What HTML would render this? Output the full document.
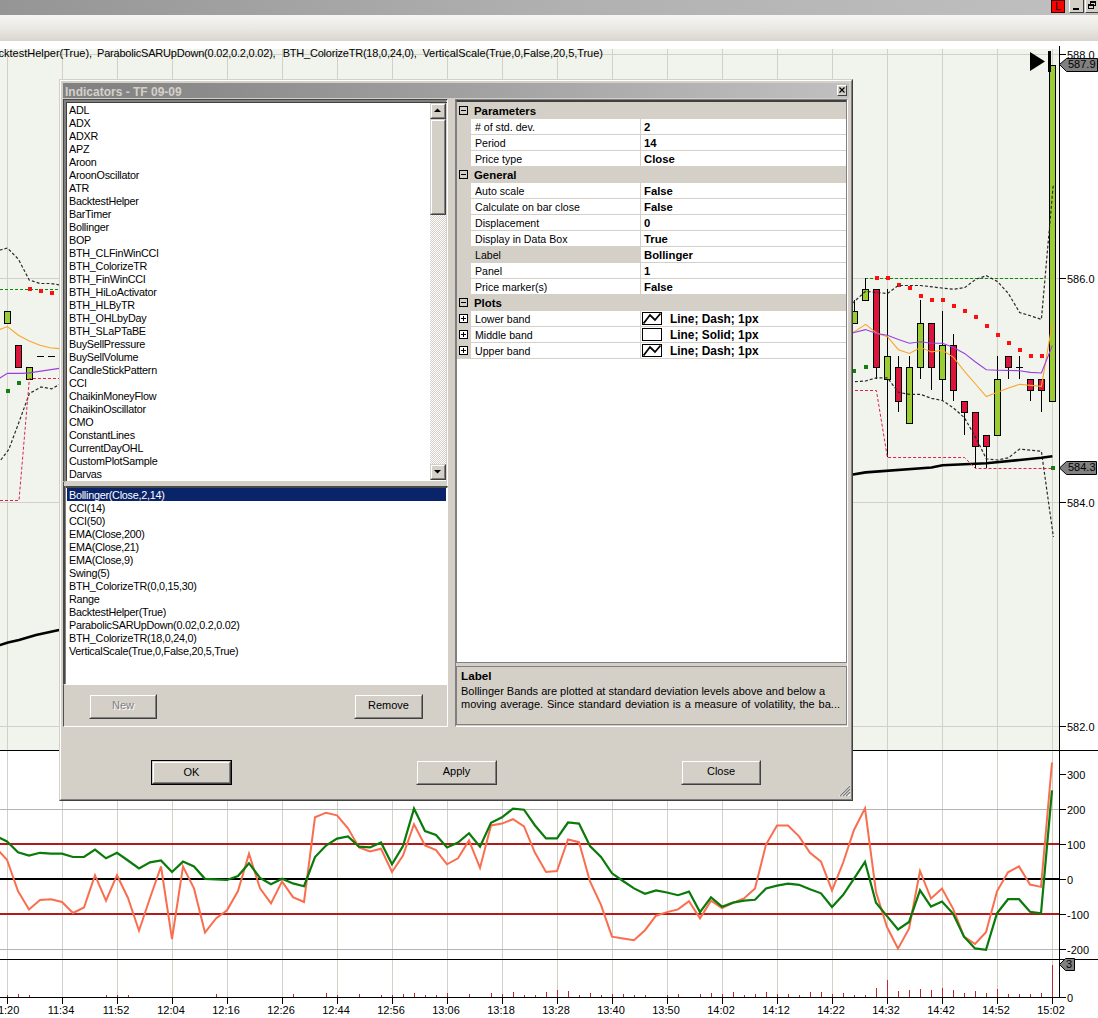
<!DOCTYPE html><html><head><meta charset="utf-8"><style>
*{box-sizing:border-box;margin:0;padding:0}
html,body{width:1098px;height:1018px;overflow:hidden;background:#fff;font-family:"Liberation Sans", sans-serif;}
.ab{position:absolute}
.t{position:absolute;white-space:pre;line-height:1;color:#000}
</style></head><body>

<div class="ab" style="left:0;top:0;width:1098px;height:15px;background:linear-gradient(to right,#959595,#b0b0b0 50%,#c0c0c0)"></div>
<div class="ab" style="left:0;top:15px;width:1098px;height:26px;background:linear-gradient(to bottom,#f6f5f2,#ebe9e4 50%,#d9d5cd)"></div>
<div class="ab" style="left:1051px;top:0;width:14px;height:13px;background:#ff0000;border:1px solid #3a0000"></div>
<div class="t" style="left:1055px;top:1px;font-size:11px;font-family:"Liberation Sans", sans-serif">L</div>
<div class="ab" style="left:1069px;top:-2px;width:15px;height:15px;background:#d4d0c8;border-left:1px solid #fff;border-top:1px solid #fff;border-right:1px solid #404040;border-bottom:1px solid #404040"></div>
<div class="ab" style="left:1073px;top:8px;width:6px;height:2px;background:#000"></div>
<div class="ab" style="left:1085px;top:-2px;width:15px;height:15px;background:#d4d0c8;border-left:1px solid #fff;border-top:1px solid #fff;border-right:1px solid #404040;border-bottom:1px solid #404040"></div>
<div class="ab" style="left:1090px;top:1px;width:6px;height:5px;border:1px solid #000;border-top-width:2px"></div>
<div class="ab" style="left:1088px;top:4px;width:6px;height:5px;border:1px solid #000;border-top-width:2px;background:#d4d0c8"></div>
<svg class="ab" style="left:0;top:0" width="1098" height="1018" shape-rendering="crispEdges">
<rect x="0" y="49" width="1059" height="701" fill="#f1f4ed"/>
<line x1="7.5" y1="49" x2="7.5" y2="750" stroke="#d4d0c8"/>
<line x1="7.5" y1="751" x2="7.5" y2="997" stroke="#d4d0c8"/>
<line x1="62.5" y1="49" x2="62.5" y2="750" stroke="#d4d0c8"/>
<line x1="62.5" y1="751" x2="62.5" y2="997" stroke="#d4d0c8"/>
<line x1="117.5" y1="49" x2="117.5" y2="750" stroke="#d4d0c8"/>
<line x1="117.5" y1="751" x2="117.5" y2="997" stroke="#d4d0c8"/>
<line x1="172.5" y1="49" x2="172.5" y2="750" stroke="#d4d0c8"/>
<line x1="172.5" y1="751" x2="172.5" y2="997" stroke="#d4d0c8"/>
<line x1="227.5" y1="49" x2="227.5" y2="750" stroke="#d4d0c8"/>
<line x1="227.5" y1="751" x2="227.5" y2="997" stroke="#d4d0c8"/>
<line x1="282.5" y1="49" x2="282.5" y2="750" stroke="#d4d0c8"/>
<line x1="282.5" y1="751" x2="282.5" y2="997" stroke="#d4d0c8"/>
<line x1="337.5" y1="49" x2="337.5" y2="750" stroke="#d4d0c8"/>
<line x1="337.5" y1="751" x2="337.5" y2="997" stroke="#d4d0c8"/>
<line x1="392.5" y1="49" x2="392.5" y2="750" stroke="#d4d0c8"/>
<line x1="392.5" y1="751" x2="392.5" y2="997" stroke="#d4d0c8"/>
<line x1="447.5" y1="49" x2="447.5" y2="750" stroke="#d4d0c8"/>
<line x1="447.5" y1="751" x2="447.5" y2="997" stroke="#d4d0c8"/>
<line x1="502.5" y1="49" x2="502.5" y2="750" stroke="#d4d0c8"/>
<line x1="502.5" y1="751" x2="502.5" y2="997" stroke="#d4d0c8"/>
<line x1="557.5" y1="49" x2="557.5" y2="750" stroke="#d4d0c8"/>
<line x1="557.5" y1="751" x2="557.5" y2="997" stroke="#d4d0c8"/>
<line x1="612.5" y1="49" x2="612.5" y2="750" stroke="#d4d0c8"/>
<line x1="612.5" y1="751" x2="612.5" y2="997" stroke="#d4d0c8"/>
<line x1="667.5" y1="49" x2="667.5" y2="750" stroke="#d4d0c8"/>
<line x1="667.5" y1="751" x2="667.5" y2="997" stroke="#d4d0c8"/>
<line x1="722.5" y1="49" x2="722.5" y2="750" stroke="#d4d0c8"/>
<line x1="722.5" y1="751" x2="722.5" y2="997" stroke="#d4d0c8"/>
<line x1="777.5" y1="49" x2="777.5" y2="750" stroke="#d4d0c8"/>
<line x1="777.5" y1="751" x2="777.5" y2="997" stroke="#d4d0c8"/>
<line x1="832.5" y1="49" x2="832.5" y2="750" stroke="#d4d0c8"/>
<line x1="832.5" y1="751" x2="832.5" y2="997" stroke="#d4d0c8"/>
<line x1="887.5" y1="49" x2="887.5" y2="750" stroke="#d4d0c8"/>
<line x1="887.5" y1="751" x2="887.5" y2="997" stroke="#d4d0c8"/>
<line x1="942.5" y1="49" x2="942.5" y2="750" stroke="#d4d0c8"/>
<line x1="942.5" y1="751" x2="942.5" y2="997" stroke="#d4d0c8"/>
<line x1="997.5" y1="49" x2="997.5" y2="750" stroke="#d4d0c8"/>
<line x1="997.5" y1="751" x2="997.5" y2="997" stroke="#d4d0c8"/>
<line x1="1052.5" y1="49" x2="1052.5" y2="750" stroke="#d4d0c8"/>
<line x1="1052.5" y1="751" x2="1052.5" y2="997" stroke="#d4d0c8"/>
<line x1="0" y1="54.5" x2="1059" y2="54.5" stroke="#d4d0c8"/>
<line x1="0" y1="278.5" x2="1059" y2="278.5" stroke="#d4d0c8"/>
<line x1="0" y1="502.5" x2="1059" y2="502.5" stroke="#d4d0c8"/>
<line x1="0" y1="726.5" x2="1059" y2="726.5" stroke="#d4d0c8"/>
<line x1="0" y1="809.5" x2="1059" y2="809.5" stroke="#b4b4b4"/>
<line x1="0" y1="949.5" x2="1059" y2="949.5" stroke="#b4b4b4"/>
<rect x="0" y="750" width="1098" height="1" fill="#000"/>
<rect x="0" y="959" width="1098" height="1" fill="#000"/>
<rect x="0" y="997" width="1059" height="1" fill="#000"/>
<rect x="1059" y="46" width="1" height="952" fill="#000"/>
<rect x="1059" y="54" width="7" height="1" fill="#000"/>
<rect x="1059" y="278" width="7" height="1" fill="#000"/>
<rect x="1059" y="502" width="7" height="1" fill="#000"/>
<rect x="1059" y="726" width="7" height="1" fill="#000"/>
<rect x="1059" y="774" width="7" height="1" fill="#000"/>
<rect x="1059" y="809" width="7" height="1" fill="#000"/>
<rect x="1059" y="844" width="7" height="1" fill="#000"/>
<rect x="1059" y="879" width="7" height="1" fill="#000"/>
<rect x="1059" y="914" width="7" height="1" fill="#000"/>
<rect x="1059" y="949" width="7" height="1" fill="#000"/>
<rect x="1059" y="997" width="7" height="1" fill="#000"/>
<rect x="7" y="997" width="1" height="7" fill="#000"/>
<rect x="62" y="997" width="1" height="7" fill="#000"/>
<rect x="117" y="997" width="1" height="7" fill="#000"/>
<rect x="172" y="997" width="1" height="7" fill="#000"/>
<rect x="227" y="997" width="1" height="7" fill="#000"/>
<rect x="282" y="997" width="1" height="7" fill="#000"/>
<rect x="337" y="997" width="1" height="7" fill="#000"/>
<rect x="392" y="997" width="1" height="7" fill="#000"/>
<rect x="447" y="997" width="1" height="7" fill="#000"/>
<rect x="502" y="997" width="1" height="7" fill="#000"/>
<rect x="557" y="997" width="1" height="7" fill="#000"/>
<rect x="612" y="997" width="1" height="7" fill="#000"/>
<rect x="667" y="997" width="1" height="7" fill="#000"/>
<rect x="722" y="997" width="1" height="7" fill="#000"/>
<rect x="777" y="997" width="1" height="7" fill="#000"/>
<rect x="832" y="997" width="1" height="7" fill="#000"/>
<rect x="887" y="997" width="1" height="7" fill="#000"/>
<rect x="942" y="997" width="1" height="7" fill="#000"/>
<rect x="997" y="997" width="1" height="7" fill="#000"/>
<rect x="1052" y="997" width="1" height="7" fill="#000"/>
<rect x="0" y="843" width="1059" height="2" fill="#b01c1c"/>
<rect x="0" y="913" width="1059" height="2" fill="#b01c1c"/>
<rect x="0" y="878" width="1059" height="2" fill="#000"/>
<rect x="7" y="995" width="1" height="2" fill="#c0282d"/>
<rect x="18" y="994" width="1" height="3" fill="#c0282d"/>
<rect x="29" y="995" width="1" height="2" fill="#c0282d"/>
<rect x="106" y="995" width="1" height="2" fill="#c0282d"/>
<rect x="117" y="995" width="1" height="2" fill="#c0282d"/>
<rect x="128" y="995" width="1" height="2" fill="#c0282d"/>
<rect x="216" y="994" width="1" height="3" fill="#c0282d"/>
<rect x="293" y="994" width="1" height="3" fill="#c0282d"/>
<rect x="326" y="993" width="1" height="4" fill="#c0282d"/>
<rect x="337" y="995" width="1" height="2" fill="#c0282d"/>
<rect x="359" y="994" width="1" height="3" fill="#c0282d"/>
<rect x="381" y="995" width="1" height="2" fill="#c0282d"/>
<rect x="392" y="995" width="1" height="2" fill="#c0282d"/>
<rect x="403" y="994" width="1" height="3" fill="#c0282d"/>
<rect x="414" y="993" width="1" height="4" fill="#c0282d"/>
<rect x="425" y="995" width="1" height="2" fill="#c0282d"/>
<rect x="436" y="995" width="1" height="2" fill="#c0282d"/>
<rect x="447" y="993" width="1" height="4" fill="#c0282d"/>
<rect x="469" y="994" width="1" height="3" fill="#c0282d"/>
<rect x="491" y="993" width="1" height="4" fill="#c0282d"/>
<rect x="502" y="994" width="1" height="3" fill="#c0282d"/>
<rect x="513" y="992" width="1" height="5" fill="#c0282d"/>
<rect x="524" y="995" width="1" height="2" fill="#c0282d"/>
<rect x="535" y="995" width="1" height="2" fill="#c0282d"/>
<rect x="546" y="992" width="1" height="5" fill="#c0282d"/>
<rect x="557" y="990" width="1" height="7" fill="#c0282d"/>
<rect x="568" y="991" width="1" height="6" fill="#c0282d"/>
<rect x="579" y="995" width="1" height="2" fill="#c0282d"/>
<rect x="590" y="993" width="1" height="4" fill="#c0282d"/>
<rect x="601" y="995" width="1" height="2" fill="#c0282d"/>
<rect x="612" y="994" width="1" height="3" fill="#c0282d"/>
<rect x="623" y="994" width="1" height="3" fill="#c0282d"/>
<rect x="634" y="995" width="1" height="2" fill="#c0282d"/>
<rect x="645" y="995" width="1" height="2" fill="#c0282d"/>
<rect x="667" y="995" width="1" height="2" fill="#c0282d"/>
<rect x="678" y="994" width="1" height="3" fill="#c0282d"/>
<rect x="700" y="994" width="1" height="3" fill="#c0282d"/>
<rect x="711" y="993" width="1" height="4" fill="#c0282d"/>
<rect x="722" y="994" width="1" height="3" fill="#c0282d"/>
<rect x="733" y="992" width="1" height="5" fill="#c0282d"/>
<rect x="744" y="995" width="1" height="2" fill="#c0282d"/>
<rect x="755" y="994" width="1" height="3" fill="#c0282d"/>
<rect x="766" y="992" width="1" height="5" fill="#c0282d"/>
<rect x="777" y="994" width="1" height="3" fill="#c0282d"/>
<rect x="788" y="994" width="1" height="3" fill="#c0282d"/>
<rect x="799" y="995" width="1" height="2" fill="#c0282d"/>
<rect x="810" y="992" width="1" height="5" fill="#c0282d"/>
<rect x="821" y="992" width="1" height="5" fill="#c0282d"/>
<rect x="832" y="994" width="1" height="3" fill="#c0282d"/>
<rect x="843" y="993" width="1" height="4" fill="#c0282d"/>
<rect x="854" y="995" width="1" height="2" fill="#c0282d"/>
<rect x="865" y="995" width="1" height="2" fill="#c0282d"/>
<rect x="876" y="988" width="1" height="9" fill="#c0282d"/>
<rect x="887" y="980" width="1" height="17" fill="#c0282d"/>
<rect x="898" y="991" width="1" height="6" fill="#c0282d"/>
<rect x="909" y="990" width="1" height="7" fill="#c0282d"/>
<rect x="920" y="989" width="1" height="8" fill="#c0282d"/>
<rect x="931" y="990" width="1" height="7" fill="#c0282d"/>
<rect x="942" y="988" width="1" height="9" fill="#c0282d"/>
<rect x="953" y="990" width="1" height="7" fill="#c0282d"/>
<rect x="964" y="993" width="1" height="4" fill="#c0282d"/>
<rect x="975" y="991" width="1" height="6" fill="#c0282d"/>
<rect x="986" y="993" width="1" height="4" fill="#c0282d"/>
<rect x="997" y="989" width="1" height="8" fill="#c0282d"/>
<rect x="1008" y="994" width="1" height="3" fill="#c0282d"/>
<rect x="1019" y="994" width="1" height="3" fill="#c0282d"/>
<rect x="1030" y="994" width="1" height="3" fill="#c0282d"/>
<rect x="1041" y="993" width="1" height="4" fill="#c0282d"/>
<rect x="1052" y="965" width="1" height="32" fill="#c0282d"/>
</svg>
<svg class="ab" style="left:0;top:0" width="1098" height="1018">
<defs><clipPath id="cc"><rect x="0" y="751" width="1059" height="208"/></clipPath></defs>
<g clip-path="url(#cc)"><polyline points="-4.0,848.0 7.0,859.7 18.0,891.0 29.0,909.4 40.0,900.0 51.0,899.3 62.0,902.0 73.0,913.0 84.0,907.5 95.0,875.2 106.0,900.7 117.0,875.2 128.0,898.0 139.0,930.7 150.0,898.0 161.0,866.5 172.0,939.0 183.0,866.5 194.0,888.4 205.0,932.6 216.0,918.4 227.0,910.2 238.0,891.0 249.0,853.7 260.0,888.4 271.0,903.4 282.0,881.5 293.0,897.1 304.0,902.0 315.0,817.3 326.0,812.7 337.0,815.4 348.0,828.3 359.0,847.4 370.0,851.5 381.0,848.7 392.0,872.0 403.0,855.6 414.0,824.2 425.0,845.5 436.0,850.1 447.0,864.3 458.0,858.3 469.0,840.5 480.0,867.9 491.0,825.5 502.0,823.6 513.0,819.2 524.0,826.3 535.0,852.8 546.0,872.0 557.0,871.1 568.0,839.5 579.0,842.2 590.0,881.5 601.0,904.8 612.0,936.7 623.0,938.4 634.0,940.3 645.0,930.2 656.0,915.7 667.0,912.1 678.0,909.4 689.0,901.2 700.0,918.4 711.0,900.7 722.0,908.0 733.0,902.8 744.0,898.5 755.0,888.4 766.0,844.6 777.0,825.5 788.0,825.5 799.0,836.4 810.0,852.8 821.0,861.6 832.0,890.4 843.0,863.0 854.0,830.0 865.0,808.4 876.0,892.0 887.0,927.0 898.0,948.7 909.0,928.7 920.0,871.0 931.0,898.6 942.0,888.6 953.0,908.6 964.0,936.7 975.0,944.0 986.0,932.3 997.0,891.3 1008.0,872.3 1019.0,866.4 1030.0,884.6 1041.0,886.9 1052.0,762.5" fill="none" stroke="#fa6e4f" stroke-width="2" stroke-linejoin="miter"/>
<polyline points="-4.0,836.0 7.0,841.4 18.0,852.3 29.0,855.6 40.0,852.8 51.0,853.7 62.0,853.7 73.0,857.0 84.0,857.0 95.0,849.6 106.0,858.3 117.0,852.8 128.0,860.5 139.0,868.4 150.0,862.4 161.0,860.5 172.0,872.0 183.0,861.6 194.0,866.5 205.0,878.8 216.0,879.3 227.0,880.0 238.0,876.0 249.0,863.2 260.0,878.0 271.0,884.3 282.0,878.8 293.0,883.4 304.0,886.2 315.0,857.0 326.0,845.5 337.0,838.6 348.0,836.4 359.0,846.6 370.0,847.4 381.0,842.5 392.0,864.3 403.0,846.0 414.0,808.6 425.0,831.0 436.0,835.0 447.0,847.4 458.0,842.5 469.0,833.2 480.0,846.6 491.0,822.8 502.0,817.3 513.0,808.6 524.0,809.7 535.0,825.5 546.0,838.4 557.0,838.4 568.0,822.5 579.0,823.6 590.0,846.0 601.0,857.0 612.0,873.3 623.0,881.0 634.0,888.4 645.0,893.8 656.0,890.5 667.0,892.5 678.0,895.2 689.0,891.6 700.0,912.1 711.0,897.4 722.0,906.7 733.0,902.6 744.0,900.7 755.0,899.8 766.0,888.4 777.0,885.6 788.0,883.7 799.0,884.8 810.0,889.2 821.0,893.3 832.0,907.0 843.0,895.0 854.0,878.6 865.0,861.8 876.0,902.8 887.0,916.1 898.0,929.5 909.0,922.0 920.0,890.3 931.0,906.6 942.0,901.6 953.0,913.6 964.0,936.7 975.0,948.4 986.0,949.9 997.0,913.3 1008.0,899.2 1019.0,899.2 1030.0,911.8 1041.0,913.3 1052.0,790.3" fill="none" stroke="#0a7a0a" stroke-width="2.2"/></g>
<g shape-rendering="crispEdges">
<line x1="0" y1="289.5" x2="62" y2="289.5" stroke="#0a8a0a" stroke-dasharray="3,2"/>
<line x1="865" y1="278.5" x2="1045" y2="278.5" stroke="#0a8a0a" stroke-dasharray="3,2"/>
<rect x="28" y="287" width="4" height="4" fill="#ff1010"/>
<rect x="39" y="289" width="4" height="4" fill="#ff1010"/>
<rect x="50" y="291" width="4" height="4" fill="#ff1010"/>
<rect x="875" y="276" width="4" height="4" fill="#ff1010"/>
<rect x="886" y="276" width="4" height="4" fill="#ff1010"/>
<rect x="897" y="283" width="4" height="4" fill="#ff1010"/>
<rect x="908" y="286" width="4" height="4" fill="#ff1010"/>
<rect x="919" y="294" width="4" height="4" fill="#ff1010"/>
<rect x="930" y="298" width="4" height="4" fill="#ff1010"/>
<rect x="941" y="298" width="4" height="4" fill="#ff1010"/>
<rect x="952" y="304" width="4" height="4" fill="#ff1010"/>
<rect x="963" y="309" width="4" height="4" fill="#ff1010"/>
<rect x="974" y="315" width="4" height="4" fill="#ff1010"/>
<rect x="985" y="324" width="4" height="4" fill="#ff1010"/>
<rect x="996" y="333" width="4" height="4" fill="#ff1010"/>
<rect x="1007" y="341" width="4" height="4" fill="#ff1010"/>
<rect x="1018" y="348" width="4" height="4" fill="#ff1010"/>
<rect x="1029" y="354" width="4" height="4" fill="#ff1010"/>
<rect x="1040" y="354" width="4" height="4" fill="#ff1010"/>
<rect x="17" y="381" width="4" height="4" fill="#108010"/>
<rect x="6" y="389" width="4" height="4" fill="#108010"/>
<rect x="852" y="369" width="4" height="4" fill="#108010"/>
<rect x="864" y="365" width="4" height="4" fill="#108010"/>
<rect x="1051" y="466" width="4" height="4" fill="#108010"/>
<rect x="4" y="311" width="7" height="13" fill="#000"/>
<rect x="5" y="312" width="5" height="11" fill="#9acd32"/>
<rect x="15" y="345" width="7" height="23" fill="#000"/>
<rect x="16" y="346" width="5" height="21" fill="#dc143c"/>
<rect x="26" y="367" width="7" height="13" fill="#000"/>
<rect x="27" y="368" width="5" height="11" fill="#9acd32"/>
<rect x="37" y="356" width="7" height="1" fill="#000"/>
<rect x="48" y="356" width="7" height="1" fill="#000"/>
<rect x="854" y="300" width="1" height="11" fill="#000"/>
<rect x="851" y="311" width="7" height="13" fill="#000"/>
<rect x="852" y="312" width="5" height="11" fill="#9acd32"/>
<rect x="865" y="278" width="1" height="11" fill="#000"/>
<rect x="862" y="289" width="7" height="12" fill="#000"/>
<rect x="863" y="290" width="5" height="10" fill="#9acd32"/>
<rect x="876" y="367" width="1" height="12" fill="#000"/>
<rect x="873" y="289" width="7" height="79" fill="#000"/>
<rect x="874" y="290" width="5" height="77" fill="#dc143c"/>
<rect x="887" y="289" width="1" height="67" fill="#000"/>
<rect x="887" y="379" width="1" height="78" fill="#000"/>
<rect x="884" y="356" width="7" height="24" fill="#000"/>
<rect x="885" y="357" width="5" height="22" fill="#9acd32"/>
<rect x="898" y="356" width="1" height="11" fill="#000"/>
<rect x="898" y="401" width="1" height="11" fill="#000"/>
<rect x="895" y="367" width="7" height="35" fill="#000"/>
<rect x="896" y="368" width="5" height="33" fill="#dc143c"/>
<rect x="909" y="356" width="1" height="11" fill="#000"/>
<rect x="906" y="367" width="7" height="57" fill="#000"/>
<rect x="907" y="368" width="5" height="55" fill="#9acd32"/>
<rect x="920" y="300" width="1" height="23" fill="#000"/>
<rect x="920" y="367" width="1" height="12" fill="#000"/>
<rect x="917" y="323" width="7" height="45" fill="#000"/>
<rect x="918" y="324" width="5" height="43" fill="#9acd32"/>
<rect x="931" y="367" width="1" height="23" fill="#000"/>
<rect x="928" y="323" width="7" height="45" fill="#000"/>
<rect x="929" y="324" width="5" height="43" fill="#dc143c"/>
<rect x="942" y="311" width="1" height="34" fill="#000"/>
<rect x="942" y="379" width="1" height="22" fill="#000"/>
<rect x="939" y="345" width="7" height="35" fill="#000"/>
<rect x="940" y="346" width="5" height="33" fill="#9acd32"/>
<rect x="953" y="334" width="1" height="11" fill="#000"/>
<rect x="953" y="390" width="1" height="11" fill="#000"/>
<rect x="950" y="345" width="7" height="46" fill="#000"/>
<rect x="951" y="346" width="5" height="44" fill="#dc143c"/>
<rect x="964" y="412" width="1" height="23" fill="#000"/>
<rect x="961" y="401" width="7" height="12" fill="#000"/>
<rect x="962" y="402" width="5" height="10" fill="#dc143c"/>
<rect x="975" y="446" width="1" height="22" fill="#000"/>
<rect x="972" y="412" width="7" height="35" fill="#000"/>
<rect x="973" y="413" width="5" height="33" fill="#dc143c"/>
<rect x="986" y="446" width="1" height="22" fill="#000"/>
<rect x="983" y="435" width="7" height="12" fill="#000"/>
<rect x="984" y="436" width="5" height="10" fill="#dc143c"/>
<rect x="997" y="356" width="1" height="23" fill="#000"/>
<rect x="994" y="379" width="7" height="57" fill="#000"/>
<rect x="995" y="380" width="5" height="55" fill="#9acd32"/>
<rect x="1008" y="367" width="1" height="12" fill="#000"/>
<rect x="1005" y="356" width="7" height="12" fill="#000"/>
<rect x="1006" y="357" width="5" height="10" fill="#dc143c"/>
<rect x="1019" y="356" width="1" height="11" fill="#000"/>
<rect x="1019" y="367" width="1" height="12" fill="#000"/>
<rect x="1016" y="367" width="7" height="1" fill="#000"/>
<rect x="1030" y="390" width="1" height="11" fill="#000"/>
<rect x="1027" y="379" width="7" height="12" fill="#000"/>
<rect x="1028" y="380" width="5" height="10" fill="#dc143c"/>
<rect x="1041" y="390" width="1" height="22" fill="#000"/>
<rect x="1038" y="379" width="7" height="12" fill="#000"/>
<rect x="1039" y="380" width="5" height="10" fill="#dc143c"/>
<rect x="1049" y="65" width="7" height="337" fill="#000"/>
<rect x="1050" y="66" width="5" height="335" fill="#9acd32"/>
</g>
<defs><clipPath id="pc"><rect x="0" y="49" width="1059" height="701"/></clipPath></defs><g clip-path="url(#pc)">
<polyline points="-5.0,252.0 0.0,250.0 7.4,248.0 18.4,259.2 29.2,280.0 40.0,283.5 50.0,283.5 59.3,284.8 70.0,286.0" fill="none" stroke="#2a2a2a" stroke-width="1.2" stroke-dasharray="3,2"/>
<polyline points="840.0,312.0 850.0,305.4 865.6,291.3 887.4,293.5 898.4,285.5 920.5,285.5 942.5,288.1 953.5,289.2 964.5,287.7 975.5,279.5 986.3,275.6 997.5,281.6 1008.4,293.5 1019.6,312.5 1030.4,315.8 1041.4,319.4 1053.3,184.3" fill="none" stroke="#2a2a2a" stroke-width="1.2" stroke-dasharray="3,2"/>
<polyline points="-5.0,468.0 0.0,461.0 8.8,449.4 17.6,425.9 29.4,393.5 41.0,387.0 51.8,388.8 59.3,384.6 70.0,382.0" fill="none" stroke="#2a2a2a" stroke-width="1.2" stroke-dasharray="3,2"/>
<polyline points="840.0,383.0 850.0,382.0 865.6,381.0 876.4,377.8 887.4,377.8 898.4,392.3 909.4,394.4 920.5,394.4 931.5,398.3 942.5,400.5 953.5,408.0 964.5,417.8 975.5,437.2 986.3,458.8 997.5,460.0 1008.4,457.8 1019.6,449.1 1030.4,450.2 1041.4,451.3 1053.4,537.0" fill="none" stroke="#2a2a2a" stroke-width="1.2" stroke-dasharray="3,2"/>
<polyline points="-5.0,331.0 0.0,329.4 7.4,326.6 18.4,335.3 29.2,341.0 40.0,345.3 50.0,347.8 59.3,348.6 70.0,349.0" fill="none" stroke="#fba52a" stroke-width="1.1"/>
<polyline points="840.0,338.0 850.0,334.6 865.6,324.4 876.4,333.0 887.4,336.7 898.4,349.7 909.4,353.4 920.5,347.5 931.5,351.9 942.5,350.3 953.5,357.3 964.5,371.3 975.5,384.0 986.3,396.6 997.5,392.3 1008.5,388.0 1019.6,384.3 1030.4,385.4 1041.4,386.4 1052.4,322.7" fill="none" stroke="#fba52a" stroke-width="1.1"/>
<polyline points="-5.0,380.0 0.0,377.9 7.4,373.4 21.7,373.4 29.2,372.9 59.3,368.4 70.0,367.0" fill="none" stroke="#9a3ee0" stroke-width="1.1"/>
<polyline points="840.0,335.0 850.0,333.5 865.6,329.6 876.4,333.5 887.4,335.2 898.4,339.5 909.4,343.2 920.5,341.7 931.5,343.2 942.5,343.2 953.5,347.5 964.5,353.4 975.5,362.0 986.3,369.8 997.5,370.2 1019.6,370.7 1030.4,372.4 1041.4,373.0 1052.4,345.4" fill="none" stroke="#9a3ee0" stroke-width="1.1"/>
<polyline points="-5.0,646.0 0.0,645.0 8.0,642.5 19.0,640.0 36.0,635.0 59.0,630.0 70.0,627.0" fill="none" stroke="#000" stroke-width="2.6"/>
<polyline points="840.0,477.0 850.0,475.0 865.6,472.4 931.5,467.5 942.5,465.3 986.3,463.2 1019.6,460.0 1041.4,457.8 1052.4,456.2" fill="none" stroke="#000" stroke-width="2.6"/>
<polyline points="-5.0,500.5 19.0,500.5 29.4,378.5 70.0,378.5" fill="none" stroke="#e0204a" stroke-width="1" stroke-dasharray="3,2"/>
<polyline points="840.0,390.5 876.4,390.5 887.4,457.5 964.5,457.5 975.5,468.5 1052.4,468.5" fill="none" stroke="#e0204a" stroke-width="1" stroke-dasharray="3,2"/>
</g>
<g shape-rendering="crispEdges">
<rect x="1048" y="51" width="3" height="21" fill="#000"/>
</g>
<polygon points="1030,52 1045,61.5 1030,71" fill="#000"/>
<polygon points="1059.5,64.5 1066.5,58.5 1097.5,58.5 1097.5,71.5 1066.5,71.5" fill="#808080" stroke="#000" stroke-width="1"/>
<polygon points="1059.5,468 1066.5,461.5 1096.5,461.5 1096.5,474.5 1066.5,474.5" fill="#808080" stroke="#000" stroke-width="1"/>
<polygon points="1059.5,964.5 1065.5,958.5 1074.5,958.5 1074.5,970.5 1065.5,970.5" fill="#808080" stroke="#000" stroke-width="1"/>
</svg>
<div class="t" style="left:1067px;top:50px;font-size:11px;color:#000;">588.0</div>
<div class="t" style="left:1067px;top:274px;font-size:11px;color:#000;">586.0</div>
<div class="t" style="left:1067px;top:498px;font-size:11px;color:#000;">584.0</div>
<div class="t" style="left:1067px;top:722px;font-size:11px;color:#000;">582.0</div>
<div class="t" style="left:1067px;top:770px;font-size:11px;color:#000;">300</div>
<div class="t" style="left:1067px;top:805px;font-size:11px;color:#000;">200</div>
<div class="t" style="left:1067px;top:840px;font-size:11px;color:#000;">100</div>
<div class="t" style="left:1067px;top:875px;font-size:11px;color:#000;">0</div>
<div class="t" style="left:1067px;top:910px;font-size:11px;color:#000;">-100</div>
<div class="t" style="left:1067px;top:945px;font-size:11px;color:#000;">-200</div>
<div class="t" style="left:1067px;top:993px;font-size:11px;color:#000;">0</div>
<div class="t" style="left:1068px;top:59px;font-size:11px;color:#000;">587.9</div>
<div class="t" style="left:1068px;top:462px;font-size:11px;color:#000;">584.3</div>
<div class="t" style="left:1066px;top:959px;font-size:11px;color:#000;">3</div>
<div class="t" style="left:-24px;width:60px;text-align:center;top:1005px;font-size:11px">11:20</div>
<div class="t" style="left:31px;width:60px;text-align:center;top:1005px;font-size:11px">11:34</div>
<div class="t" style="left:86px;width:60px;text-align:center;top:1005px;font-size:11px">11:52</div>
<div class="t" style="left:141px;width:60px;text-align:center;top:1005px;font-size:11px">12:04</div>
<div class="t" style="left:196px;width:60px;text-align:center;top:1005px;font-size:11px">12:16</div>
<div class="t" style="left:251px;width:60px;text-align:center;top:1005px;font-size:11px">12:26</div>
<div class="t" style="left:306px;width:60px;text-align:center;top:1005px;font-size:11px">12:44</div>
<div class="t" style="left:361px;width:60px;text-align:center;top:1005px;font-size:11px">12:56</div>
<div class="t" style="left:416px;width:60px;text-align:center;top:1005px;font-size:11px">13:06</div>
<div class="t" style="left:471px;width:60px;text-align:center;top:1005px;font-size:11px">13:18</div>
<div class="t" style="left:526px;width:60px;text-align:center;top:1005px;font-size:11px">13:28</div>
<div class="t" style="left:581px;width:60px;text-align:center;top:1005px;font-size:11px">13:40</div>
<div class="t" style="left:636px;width:60px;text-align:center;top:1005px;font-size:11px">13:50</div>
<div class="t" style="left:691px;width:60px;text-align:center;top:1005px;font-size:11px">14:02</div>
<div class="t" style="left:746px;width:60px;text-align:center;top:1005px;font-size:11px">14:12</div>
<div class="t" style="left:801px;width:60px;text-align:center;top:1005px;font-size:11px">14:22</div>
<div class="t" style="left:856px;width:60px;text-align:center;top:1005px;font-size:11px">14:32</div>
<div class="t" style="left:911px;width:60px;text-align:center;top:1005px;font-size:11px">14:42</div>
<div class="t" style="left:966px;width:60px;text-align:center;top:1005px;font-size:11px">14:52</div>
<div class="t" style="left:1021px;width:60px;text-align:center;top:1005px;font-size:11px">15:02</div>
<div class="t" style="left:-15px;top:47.5px;font-size:11px;color:#000;">BacktestHelper(True),</div>
<div class="t" style="left:97px;top:47.5px;font-size:11px;color:#000;letter-spacing:-0.2px">ParabolicSARUpDown(0.02,0.2,0.02),</div>
<div class="t" style="left:282.7px;top:47.5px;font-size:11px;color:#000;letter-spacing:-0.21px">BTH_ColorizeTR(18,0,24,0),</div>
<div class="t" style="left:422.4px;top:47.5px;font-size:11px;color:#000;letter-spacing:-0.04px">VerticalScale(True,0,False,20,5,True)</div>
<div class="ab" style="left:59px;top:79px;width:794px;height:722px;background:#d4d0c8;border-top:1px solid #d4d0c8;border-left:1px solid #d4d0c8;border-right:1px solid #404040;border-bottom:1px solid #404040"></div>
<div class="ab" style="left:60px;top:80px;width:792px;height:720px;border-top:1px solid #fff;border-left:1px solid #fff;border-right:1px solid #808080;border-bottom:1px solid #808080"></div>
<div class="ab" style="left:63px;top:83px;width:786px;height:15px;background:linear-gradient(to right,#808080,#c0c0c0)"></div>
<div class="t" style="left:65px;top:85.5px;font-size:12px;font-weight:700;color:#d4d0c8;">Indicators - TF 09-09</div>
<div class="ab" style="left:837px;top:85px;width:10px;height:11px;background:#d4d0c8;border-top:1px solid #fff;border-left:1px solid #fff;border-right:1px solid #404040;border-bottom:1px solid #404040"></div>
<svg class="ab" style="left:839px;top:87px" width="7" height="7"><path d="M0.5,0.5 L5.5,5.5 M5.5,0.5 L0.5,5.5" stroke="#000" stroke-width="1.2"/></svg>
<div class="ab" style="left:63px;top:99px;width:385px;height:628px;border-top:1px solid #505050;border-left:1px solid #505050;border-right:1px solid #fff;border-bottom:1px solid #fff"></div>
<div class="ab" style="left:63px;top:99px;width:385px;height:383px;background:#fff;border-top:1px solid #484848;border-left:1px solid #484848;border-right:1px solid #fff;border-bottom:1px solid #fff"></div>
<div class="ab" style="left:64px;top:100px;width:383px;height:382px;border-top:2px solid #808080;border-left:2px solid #808080;border-right:1px solid #d4d0c8;border-bottom:1px solid #d4d0c8"></div>
<div class="ab" style="left:66px;top:102px;width:381px;height:1px;background:#404040"></div>
<div class="ab" style="left:66px;top:102px;width:1px;height:379px;background:#404040"></div>
<div class="t" style="left:69px;top:105px;font-size:10.8px;font-weight:400;color:#000;letter-spacing:-0.25px">ADL</div>
<div class="t" style="left:69px;top:118px;font-size:10.8px;font-weight:400;color:#000;letter-spacing:-0.25px">ADX</div>
<div class="t" style="left:69px;top:131px;font-size:10.8px;font-weight:400;color:#000;letter-spacing:-0.25px">ADXR</div>
<div class="t" style="left:69px;top:144px;font-size:10.8px;font-weight:400;color:#000;letter-spacing:-0.25px">APZ</div>
<div class="t" style="left:69px;top:157px;font-size:10.8px;font-weight:400;color:#000;letter-spacing:-0.25px">Aroon</div>
<div class="t" style="left:69px;top:170px;font-size:10.8px;font-weight:400;color:#000;letter-spacing:-0.25px">AroonOscillator</div>
<div class="t" style="left:69px;top:183px;font-size:10.8px;font-weight:400;color:#000;letter-spacing:-0.25px">ATR</div>
<div class="t" style="left:69px;top:196px;font-size:10.8px;font-weight:400;color:#000;letter-spacing:-0.25px">BacktestHelper</div>
<div class="t" style="left:69px;top:209px;font-size:10.8px;font-weight:400;color:#000;letter-spacing:-0.25px">BarTimer</div>
<div class="t" style="left:69px;top:222px;font-size:10.8px;font-weight:400;color:#000;letter-spacing:-0.25px">Bollinger</div>
<div class="t" style="left:69px;top:235px;font-size:10.8px;font-weight:400;color:#000;letter-spacing:-0.25px">BOP</div>
<div class="t" style="left:69px;top:248px;font-size:10.8px;font-weight:400;color:#000;letter-spacing:-0.25px">BTH_CLFinWinCCI</div>
<div class="t" style="left:69px;top:261px;font-size:10.8px;font-weight:400;color:#000;letter-spacing:-0.25px">BTH_ColorizeTR</div>
<div class="t" style="left:69px;top:274px;font-size:10.8px;font-weight:400;color:#000;letter-spacing:-0.25px">BTH_FinWinCCI</div>
<div class="t" style="left:69px;top:287px;font-size:10.8px;font-weight:400;color:#000;letter-spacing:-0.25px">BTH_HiLoActivator</div>
<div class="t" style="left:69px;top:300px;font-size:10.8px;font-weight:400;color:#000;letter-spacing:-0.25px">BTH_HLByTR</div>
<div class="t" style="left:69px;top:313px;font-size:10.8px;font-weight:400;color:#000;letter-spacing:-0.25px">BTH_OHLbyDay</div>
<div class="t" style="left:69px;top:326px;font-size:10.8px;font-weight:400;color:#000;letter-spacing:-0.25px">BTH_SLaPTaBE</div>
<div class="t" style="left:69px;top:339px;font-size:10.8px;font-weight:400;color:#000;letter-spacing:-0.25px">BuySellPressure</div>
<div class="t" style="left:69px;top:352px;font-size:10.8px;font-weight:400;color:#000;letter-spacing:-0.25px">BuySellVolume</div>
<div class="t" style="left:69px;top:365px;font-size:10.8px;font-weight:400;color:#000;letter-spacing:-0.25px">CandleStickPattern</div>
<div class="t" style="left:69px;top:378px;font-size:10.8px;font-weight:400;color:#000;letter-spacing:-0.25px">CCI</div>
<div class="t" style="left:69px;top:391px;font-size:10.8px;font-weight:400;color:#000;letter-spacing:-0.25px">ChaikinMoneyFlow</div>
<div class="t" style="left:69px;top:404px;font-size:10.8px;font-weight:400;color:#000;letter-spacing:-0.25px">ChaikinOscillator</div>
<div class="t" style="left:69px;top:417px;font-size:10.8px;font-weight:400;color:#000;letter-spacing:-0.25px">CMO</div>
<div class="t" style="left:69px;top:430px;font-size:10.8px;font-weight:400;color:#000;letter-spacing:-0.25px">ConstantLines</div>
<div class="t" style="left:69px;top:443px;font-size:10.8px;font-weight:400;color:#000;letter-spacing:-0.25px">CurrentDayOHL</div>
<div class="t" style="left:69px;top:456px;font-size:10.8px;font-weight:400;color:#000;letter-spacing:-0.25px">CustomPlotSample</div>
<div class="t" style="left:69px;top:469px;font-size:10.8px;font-weight:400;color:#000;letter-spacing:-0.25px">Darvas</div>
<div class="ab" style="left:430px;top:103px;width:16px;height:377px;background:repeating-conic-gradient(#fff 0 25%, #d4d0c8 0 50%) 0 0/2px 2px"></div>
<div class="ab" style="left:430px;top:103px;width:16px;height:16px;background:#d4d0c8;border-top:1px solid #d4d0c8;border-left:1px solid #d4d0c8;border-right:1px solid #404040;border-bottom:1px solid #404040"></div>
<div class="ab" style="left:431px;top:104px;width:14px;height:14px;border-top:1px solid #fff;border-left:1px solid #fff;border-right:1px solid #808080;border-bottom:1px solid #808080"></div>
<div class="ab" style="left:430px;top:119px;width:16px;height:96px;background:#d4d0c8;border-top:1px solid #d4d0c8;border-left:1px solid #d4d0c8;border-right:1px solid #404040;border-bottom:1px solid #404040"></div>
<div class="ab" style="left:431px;top:120px;width:14px;height:94px;border-top:1px solid #fff;border-left:1px solid #fff;border-right:1px solid #808080;border-bottom:1px solid #808080"></div>
<div class="ab" style="left:430px;top:464px;width:16px;height:16px;background:#d4d0c8;border-top:1px solid #d4d0c8;border-left:1px solid #d4d0c8;border-right:1px solid #404040;border-bottom:1px solid #404040"></div>
<div class="ab" style="left:431px;top:465px;width:14px;height:14px;border-top:1px solid #fff;border-left:1px solid #fff;border-right:1px solid #808080;border-bottom:1px solid #808080"></div>
<svg class="ab" style="left:434px;top:108px" width="8" height="5"><polygon points="0,4 7,4 3.5,0.5" fill="#000"/></svg>
<svg class="ab" style="left:434px;top:470px" width="8" height="5"><polygon points="0,0 7,0 3.5,3.5" fill="#000"/></svg>
<div class="ab" style="left:63px;top:486px;width:385px;height:199px;background:#fff;border-top:2px solid #484848;border-left:2px solid #484848;border-right:1px solid #fff;border-bottom:1px solid #fff"></div>
<div class="ab" style="left:65px;top:486px;width:1px;height:198px;background:#808080"></div>
<div class="ab" style="left:67px;top:488px;width:379px;height:13px;background:#0a246a"></div>
<div class="t" style="left:69px;top:490px;font-size:10.8px;font-weight:400;color:#fff;letter-spacing:-0.25px">Bollinger(Close,2,14)</div>
<div class="t" style="left:69px;top:503px;font-size:10.8px;font-weight:400;color:#000;letter-spacing:-0.25px">CCI(14)</div>
<div class="t" style="left:69px;top:516px;font-size:10.8px;font-weight:400;color:#000;letter-spacing:-0.25px">CCI(50)</div>
<div class="t" style="left:69px;top:529px;font-size:10.8px;font-weight:400;color:#000;letter-spacing:-0.25px">EMA(Close,200)</div>
<div class="t" style="left:69px;top:542px;font-size:10.8px;font-weight:400;color:#000;letter-spacing:-0.25px">EMA(Close,21)</div>
<div class="t" style="left:69px;top:555px;font-size:10.8px;font-weight:400;color:#000;letter-spacing:-0.25px">EMA(Close,9)</div>
<div class="t" style="left:69px;top:568px;font-size:10.8px;font-weight:400;color:#000;letter-spacing:-0.25px">Swing(5)</div>
<div class="t" style="left:69px;top:581px;font-size:10.8px;font-weight:400;color:#000;letter-spacing:-0.25px">BTH_ColorizeTR(0,0,15,30)</div>
<div class="t" style="left:69px;top:594px;font-size:10.8px;font-weight:400;color:#000;letter-spacing:-0.25px">Range</div>
<div class="t" style="left:69px;top:607px;font-size:10.8px;font-weight:400;color:#000;letter-spacing:-0.25px">BacktestHelper(True)</div>
<div class="t" style="left:69px;top:620px;font-size:10.8px;font-weight:400;color:#000;letter-spacing:-0.25px">ParabolicSARUpDown(0.02,0.2,0.02)</div>
<div class="t" style="left:69px;top:633px;font-size:10.8px;font-weight:400;color:#000;letter-spacing:-0.25px">BTH_ColorizeTR(18,0,24,0)</div>
<div class="t" style="left:69px;top:646px;font-size:10.8px;font-weight:400;color:#000;letter-spacing:-0.25px">VerticalScale(True,0,False,20,5,True)</div>
<div class="ab" style="left:89px;top:694px;width:68px;height:25px;background:#d4d0c8;border-top:1px solid #d4d0c8;border-left:1px solid #d4d0c8;border-right:1px solid #404040;border-bottom:1px solid #404040"></div>
<div class="ab" style="left:90px;top:695px;width:66px;height:23px;border-top:1px solid #fff;border-left:1px solid #fff;border-right:1px solid #808080;border-bottom:1px solid #808080"></div>
<div class="t" style="left:90px;top:701px;width:68px;text-align:center;font-size:11px;color:#fff">New</div>
<div class="t" style="left:89px;top:700px;width:68px;text-align:center;font-size:11px;color:#808080">New</div>
<div class="ab" style="left:354px;top:694px;width:69px;height:25px;background:#d4d0c8;border-top:1px solid #d4d0c8;border-left:1px solid #d4d0c8;border-right:1px solid #404040;border-bottom:1px solid #404040"></div>
<div class="ab" style="left:355px;top:695px;width:67px;height:23px;border-top:1px solid #fff;border-left:1px solid #fff;border-right:1px solid #808080;border-bottom:1px solid #808080"></div>
<div class="t" style="left:354px;top:700px;width:69px;text-align:center;font-size:11px;color:#000">Remove</div>
<div class="ab" style="left:151px;top:760px;width:81px;height:25px;border:1px solid #000"></div>
<div class="ab" style="left:152px;top:761px;width:79px;height:23px;background:#d4d0c8;border-top:1px solid #d4d0c8;border-left:1px solid #d4d0c8;border-right:1px solid #404040;border-bottom:1px solid #404040"></div>
<div class="ab" style="left:153px;top:762px;width:77px;height:21px;border-top:1px solid #fff;border-left:1px solid #fff;border-right:1px solid #808080;border-bottom:1px solid #808080"></div>
<div class="t" style="left:152px;top:767px;width:79px;text-align:center;font-size:11px;color:#000">OK</div>
<div class="ab" style="left:416px;top:760px;width:81px;height:25px;background:#d4d0c8;border-top:1px solid #d4d0c8;border-left:1px solid #d4d0c8;border-right:1px solid #404040;border-bottom:1px solid #404040"></div>
<div class="ab" style="left:417px;top:761px;width:79px;height:23px;border-top:1px solid #fff;border-left:1px solid #fff;border-right:1px solid #808080;border-bottom:1px solid #808080"></div>
<div class="t" style="left:416px;top:766px;width:81px;text-align:center;font-size:11px;color:#000">Apply</div>
<div class="ab" style="left:681px;top:760px;width:80px;height:25px;background:#d4d0c8;border-top:1px solid #d4d0c8;border-left:1px solid #d4d0c8;border-right:1px solid #404040;border-bottom:1px solid #404040"></div>
<div class="ab" style="left:682px;top:761px;width:78px;height:23px;border-top:1px solid #fff;border-left:1px solid #fff;border-right:1px solid #808080;border-bottom:1px solid #808080"></div>
<div class="t" style="left:681px;top:766px;width:80px;text-align:center;font-size:11px;color:#000">Close</div>
<div class="ab" style="left:455px;top:99px;width:393px;height:628px;border-top:1px solid #808080;border-left:1px solid #808080;border-right:1px solid #fff;border-bottom:1px solid #fff"></div>
<div class="ab" style="left:456px;top:100px;width:391px;height:563px;background:#fff;border:1px solid #808080;border-top:2px solid #404040"></div>
<div class="ab" style="left:457px;top:102px;width:389px;height:16px;background:#d4d0c8"></div>
<svg class="ab" style="left:459px;top:106px" width="9" height="9"><rect x="0.5" y="0.5" width="8" height="8" fill="none" stroke="#000"/><rect x="2" y="4" width="5" height="1" fill="#000"/></svg>
<div class="t" style="left:474px;top:105.5px;font-size:11.4px;font-weight:700;color:#000;">Parameters</div>
<div class="ab" style="left:457px;top:118px;width:14px;height:16px;background:#d4d0c8"></div>
<div class="ab" style="left:471px;top:118px;width:375px;height:1px;background:#d4d0c8"></div>
<div class="ab" style="left:640px;top:118px;width:1px;height:16px;background:#d4d0c8"></div>
<div class="t" style="left:475px;top:122px;font-size:10.6px;font-weight:400;color:#000;"># of std. dev.</div>
<div class="t" style="left:644px;top:122px;font-size:11.3px;font-weight:700;color:#000;">2</div>
<div class="ab" style="left:457px;top:134px;width:14px;height:16px;background:#d4d0c8"></div>
<div class="ab" style="left:471px;top:134px;width:375px;height:1px;background:#d4d0c8"></div>
<div class="ab" style="left:640px;top:134px;width:1px;height:16px;background:#d4d0c8"></div>
<div class="t" style="left:475px;top:138px;font-size:10.6px;font-weight:400;color:#000;">Period</div>
<div class="t" style="left:644px;top:138px;font-size:11.3px;font-weight:700;color:#000;">14</div>
<div class="ab" style="left:457px;top:150px;width:14px;height:16px;background:#d4d0c8"></div>
<div class="ab" style="left:471px;top:150px;width:375px;height:1px;background:#d4d0c8"></div>
<div class="ab" style="left:640px;top:150px;width:1px;height:16px;background:#d4d0c8"></div>
<div class="t" style="left:475px;top:154px;font-size:10.6px;font-weight:400;color:#000;">Price type</div>
<div class="t" style="left:644px;top:154px;font-size:11.3px;font-weight:700;color:#000;">Close</div>
<div class="ab" style="left:457px;top:166px;width:389px;height:16px;background:#d4d0c8"></div>
<svg class="ab" style="left:459px;top:170px" width="9" height="9"><rect x="0.5" y="0.5" width="8" height="8" fill="none" stroke="#000"/><rect x="2" y="4" width="5" height="1" fill="#000"/></svg>
<div class="t" style="left:474px;top:169.5px;font-size:11.4px;font-weight:700;color:#000;">General</div>
<div class="ab" style="left:457px;top:182px;width:14px;height:16px;background:#d4d0c8"></div>
<div class="ab" style="left:471px;top:182px;width:375px;height:1px;background:#d4d0c8"></div>
<div class="ab" style="left:640px;top:182px;width:1px;height:16px;background:#d4d0c8"></div>
<div class="t" style="left:475px;top:186px;font-size:10.6px;font-weight:400;color:#000;">Auto scale</div>
<div class="t" style="left:644px;top:186px;font-size:11.3px;font-weight:700;color:#000;">False</div>
<div class="ab" style="left:457px;top:198px;width:14px;height:16px;background:#d4d0c8"></div>
<div class="ab" style="left:471px;top:198px;width:375px;height:1px;background:#d4d0c8"></div>
<div class="ab" style="left:640px;top:198px;width:1px;height:16px;background:#d4d0c8"></div>
<div class="t" style="left:475px;top:202px;font-size:10.6px;font-weight:400;color:#000;">Calculate on bar close</div>
<div class="t" style="left:644px;top:202px;font-size:11.3px;font-weight:700;color:#000;">False</div>
<div class="ab" style="left:457px;top:214px;width:14px;height:16px;background:#d4d0c8"></div>
<div class="ab" style="left:471px;top:214px;width:375px;height:1px;background:#d4d0c8"></div>
<div class="ab" style="left:640px;top:214px;width:1px;height:16px;background:#d4d0c8"></div>
<div class="t" style="left:475px;top:218px;font-size:10.6px;font-weight:400;color:#000;">Displacement</div>
<div class="t" style="left:644px;top:218px;font-size:11.3px;font-weight:700;color:#000;">0</div>
<div class="ab" style="left:457px;top:230px;width:14px;height:16px;background:#d4d0c8"></div>
<div class="ab" style="left:471px;top:230px;width:375px;height:1px;background:#d4d0c8"></div>
<div class="ab" style="left:640px;top:230px;width:1px;height:16px;background:#d4d0c8"></div>
<div class="t" style="left:475px;top:234px;font-size:10.6px;font-weight:400;color:#000;">Display in Data Box</div>
<div class="t" style="left:644px;top:234px;font-size:11.3px;font-weight:700;color:#000;">True</div>
<div class="ab" style="left:457px;top:246px;width:14px;height:16px;background:#d4d0c8"></div>
<div class="ab" style="left:471px;top:246px;width:375px;height:1px;background:#d4d0c8"></div>
<div class="ab" style="left:640px;top:246px;width:1px;height:16px;background:#d4d0c8"></div>
<div class="ab" style="left:471px;top:247px;width:169px;height:15px;background:#d4d0c8"></div>
<div class="t" style="left:475px;top:250px;font-size:10.6px;font-weight:400;color:#000;">Label</div>
<div class="t" style="left:644px;top:250px;font-size:11.3px;font-weight:700;color:#000;">Bollinger</div>
<div class="ab" style="left:457px;top:262px;width:14px;height:16px;background:#d4d0c8"></div>
<div class="ab" style="left:471px;top:262px;width:375px;height:1px;background:#d4d0c8"></div>
<div class="ab" style="left:640px;top:262px;width:1px;height:16px;background:#d4d0c8"></div>
<div class="t" style="left:475px;top:266px;font-size:10.6px;font-weight:400;color:#000;">Panel</div>
<div class="t" style="left:644px;top:266px;font-size:11.3px;font-weight:700;color:#000;">1</div>
<div class="ab" style="left:457px;top:278px;width:14px;height:16px;background:#d4d0c8"></div>
<div class="ab" style="left:471px;top:278px;width:375px;height:1px;background:#d4d0c8"></div>
<div class="ab" style="left:640px;top:278px;width:1px;height:16px;background:#d4d0c8"></div>
<div class="t" style="left:475px;top:282px;font-size:10.6px;font-weight:400;color:#000;">Price marker(s)</div>
<div class="t" style="left:644px;top:282px;font-size:11.3px;font-weight:700;color:#000;">False</div>
<div class="ab" style="left:457px;top:294px;width:389px;height:16px;background:#d4d0c8"></div>
<svg class="ab" style="left:459px;top:298px" width="9" height="9"><rect x="0.5" y="0.5" width="8" height="8" fill="none" stroke="#000"/><rect x="2" y="4" width="5" height="1" fill="#000"/></svg>
<div class="t" style="left:474px;top:297.5px;font-size:11.4px;font-weight:700;color:#000;">Plots</div>
<div class="ab" style="left:457px;top:310px;width:14px;height:16px;background:#d4d0c8"></div>
<div class="ab" style="left:471px;top:310px;width:375px;height:1px;background:#d4d0c8"></div>
<div class="ab" style="left:640px;top:310px;width:1px;height:16px;background:#d4d0c8"></div>
<div class="t" style="left:475px;top:314px;font-size:10.6px;font-weight:400;color:#000;">Lower band</div>
<svg class="ab" style="left:459px;top:314px" width="9" height="9"><rect x="0.5" y="0.5" width="8" height="8" fill="#fff" stroke="#000"/><rect x="2" y="4" width="5" height="1" fill="#000"/><rect x="4" y="2" width="1" height="5" fill="#000"/></svg>
<svg class="ab" style="left:642px;top:312px" width="20" height="13"><rect x="0.5" y="0.5" width="19" height="12" fill="#fff" stroke="#000"/><polyline points="1.5,11.5 8,3 13,8 18.5,1.5" fill="none" stroke="#000" stroke-width="1.8"/></svg>
<div class="t" style="left:670px;top:314px;font-size:11.9px;font-weight:700;color:#000;">Line; Dash; 1px</div>
<div class="ab" style="left:457px;top:326px;width:14px;height:16px;background:#d4d0c8"></div>
<div class="ab" style="left:471px;top:326px;width:375px;height:1px;background:#d4d0c8"></div>
<div class="ab" style="left:640px;top:326px;width:1px;height:16px;background:#d4d0c8"></div>
<div class="t" style="left:475px;top:330px;font-size:10.6px;font-weight:400;color:#000;">Middle band</div>
<svg class="ab" style="left:459px;top:330px" width="9" height="9"><rect x="0.5" y="0.5" width="8" height="8" fill="#fff" stroke="#000"/><rect x="2" y="4" width="5" height="1" fill="#000"/><rect x="4" y="2" width="1" height="5" fill="#000"/></svg>
<svg class="ab" style="left:642px;top:328px" width="20" height="13"><rect x="0.5" y="0.5" width="19" height="12" fill="#fff" stroke="#000"/></svg>
<div class="t" style="left:670px;top:330px;font-size:11.9px;font-weight:700;color:#000;">Line; Solid; 1px</div>
<div class="ab" style="left:457px;top:342px;width:14px;height:16px;background:#d4d0c8"></div>
<div class="ab" style="left:471px;top:342px;width:375px;height:1px;background:#d4d0c8"></div>
<div class="ab" style="left:640px;top:342px;width:1px;height:16px;background:#d4d0c8"></div>
<div class="t" style="left:475px;top:346px;font-size:10.6px;font-weight:400;color:#000;">Upper band</div>
<svg class="ab" style="left:459px;top:346px" width="9" height="9"><rect x="0.5" y="0.5" width="8" height="8" fill="#fff" stroke="#000"/><rect x="2" y="4" width="5" height="1" fill="#000"/><rect x="4" y="2" width="1" height="5" fill="#000"/></svg>
<svg class="ab" style="left:642px;top:344px" width="20" height="13"><rect x="0.5" y="0.5" width="19" height="12" fill="#fff" stroke="#000"/><polyline points="1.5,11.5 8,3 13,8 18.5,1.5" fill="none" stroke="#000" stroke-width="1.8"/></svg>
<div class="t" style="left:670px;top:346px;font-size:11.9px;font-weight:700;color:#000;">Line; Dash; 1px</div>
<div class="ab" style="left:457px;top:358px;width:389px;height:1px;background:#d4d0c8"></div>
<div class="ab" style="left:456px;top:666px;width:391px;height:59px;border:1px solid #808080"></div>
<div class="t" style="left:461px;top:670px;font-size:11.7px;font-weight:700;color:#000;">Label</div>
<div class="ab" style="left:461px;top:685px;width:364px;font-size:11px;line-height:13px;text-align:justify;text-align-last:justify;white-space:nowrap">Bollinger Bands are plotted at standard deviation levels above and below a</div>
<div class="ab" style="left:461px;top:698px;width:379px;font-size:11px;line-height:13px;text-align:justify;text-align-last:justify;white-space:nowrap">moving average. Since standard deviation is a measure of volatility, the ba...</div>
<svg class="ab" style="left:838px;top:784px" width="13" height="13"><path d="M12,1 L1,12 M12,4 L4,12 M12,7 L7,12 M12,10 L10,12" stroke="#fff" stroke-width="1"/><path d="M12,2 L2,12 M12,5 L5,12 M12,8 L8,12" stroke="#808080" stroke-width="1.2"/></svg>
</body></html>
